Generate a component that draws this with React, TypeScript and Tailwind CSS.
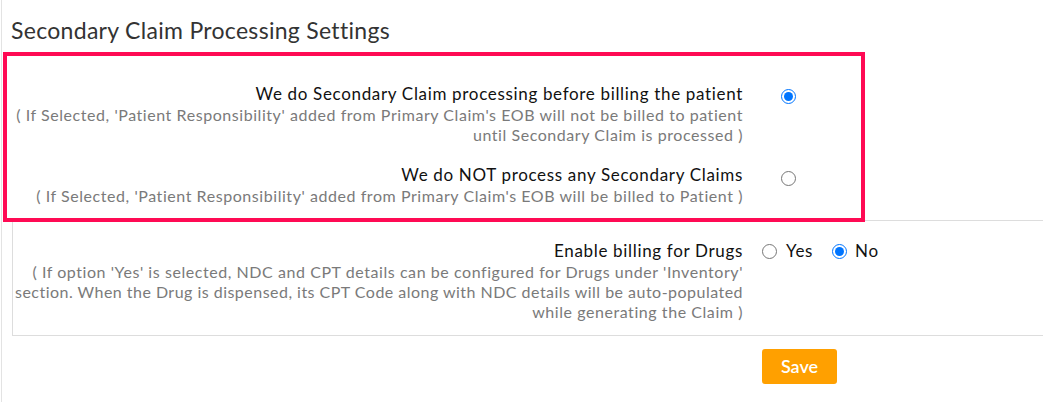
import React from "react";

function Radio({ checked, className }: { checked: boolean; className: string }) {
  return (
    <input
      type="radio"
      checked={checked}
      readOnly
      className={"m-0 h-[15px] w-[15px] shrink-0 " + className}
    />
  );
}

function Line({ children, className }: { children: React.ReactNode; className: string }) {
  return (
    <div className="flex justify-end whitespace-nowrap">
      <span className={className}>{children}</span>
    </div>
  );
}

export default function App() {
  return (
    <div className="relative h-[402px] w-[1042px] ml-[1px] overflow-hidden border-l border-[#e3e3e3] bg-white font-['Lato','Liberation_Sans',sans-serif]">
      <h3 className="pl-[9px] pt-[15px] text-[23px] leading-[30px] tracking-[0.3px] text-[#333333] font-normal">
        Secondary Claim Processing Settings
      </h3>

      <div className="relative z-10 ml-[1px] mt-[7px] h-[170px] w-[862px] border-4 border-[#ff0a54] pl-[8px] pt-[26px]">
        <div className="flex items-start">
          <div className="w-[728px] text-[16px] leading-[20px] text-[#7a7a7a]">
            <Line className="text-[17px] leading-[23px] tracking-[0.67px] text-[#111111]">
              We do Secondary Claim processing before billing the patient
            </Line>
            <Line className="tracking-[0.56px]">
              ( If Selected, 'Patient Responsibility' added from Primary Claim's EOB will not be billed to patient
            </Line>
            <Line className="tracking-[0.56px]">until Secondary Claim is processed )</Line>
          </div>
          <Radio checked className="ml-[38px] mt-[7px]" />
        </div>

        <div className="mt-[18px] flex items-start">
          <div className="w-[728px] text-[16px] leading-[20px] text-[#7a7a7a]">
            <Line className="text-[17px] leading-[23px] tracking-[0.67px] text-[#111111]">
              We do NOT process any Secondary Claims
            </Line>
            <Line className="tracking-[0.56px]">
              ( If Selected, 'Patient Responsibility' added from Primary Claim's EOB will be billed to Patient )
            </Line>
          </div>
          <Radio checked={false} className="ml-[38px] mt-[8px]" />
        </div>
      </div>

      <div className="-mt-[2px] ml-[10px] h-[116px] w-[1100px] border border-[#dddddd] pl-[2px] pt-[18px]">
        <div className="flex items-start">
          <div className="w-[728px] text-[16px] leading-[20px] text-[#7a7a7a]">
            <Line className="text-[17px] leading-[23px] tracking-[0.67px] text-[#111111]">
              Enable billing for Drugs
            </Line>
            <Line className="tracking-[0.56px]">
              ( If option 'Yes' is selected, NDC and CPT details can be configured for Drugs under 'Inventory'
            </Line>
            <Line className="tracking-[0.475px]">
              section. When the Drug is dispensed, its CPT Code along with NDC details will be auto-populated
            </Line>
            <Line className="tracking-[0.56px]">while generating the Claim )</Line>
          </div>
          <div className="ml-[19px] flex items-start">
            <Radio checked={false} className="mt-[5px]" />
            <span className="ml-[9px] text-[17px] leading-[23px] tracking-[0.67px] text-[#111111]">Yes</span>
            <Radio checked className="ml-[19px] mt-[5px]" />
            <span className="ml-[8px] text-[17px] leading-[23px] tracking-[0.67px] text-[#111111]">No</span>
          </div>
        </div>
      </div>

      <button className="ml-[760px] mt-[13px] flex h-[35px] w-[75px] items-center justify-center rounded-[3px] bg-[#ffa000] text-[18px] font-semibold text-white">
        Save
      </button>
    </div>
  );
}
